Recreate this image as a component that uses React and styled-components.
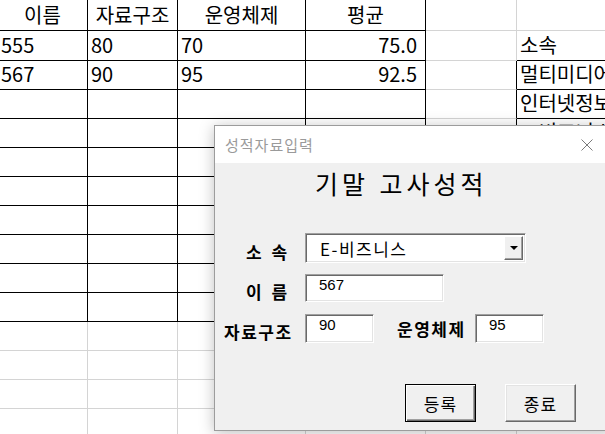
import React from 'react'
import styled, { createGlobalStyle } from 'styled-components'

const GlobalStyle = createGlobalStyle`
  html, body {
    margin: 0;
    padding: 0;
    background: #fff;
    overflow: hidden;
  }
  body {
    font-family: "Noto Sans CJK KR", "Noto Sans", sans-serif;
  }
`

const BLACK = '#000'
const GRID = '#d4d4d4'

const sheet = [
  ['이름', '자료구조', '운영체제', '평균', '', ''],
  ['555', '80', '70', '75.0', '', '소속'],
  ['567', '90', '95', '92.5', '', '멀티미디어'],
  ['', '', '', '', '', '인터넷정보'],
  ['', '', '', '', '', 'E-비즈니스'],
]
while (sheet.length < 15) sheet.push(['', '', '', '', '', ''])

// table A:D has thin black borders down to row 11, F3:F5 is a boxed list
const rightColor = (r, c) => {
  if (c <= 3 && r <= 10) return BLACK
  if (c === 4 && r >= 2 && r <= 4) return BLACK
  return GRID
}
const bottomColor = (r, c) => {
  if (c <= 3 && r <= 10) return BLACK
  if (c === 5 && r >= 1 && r <= 4) return BLACK
  return GRID
}
const alignOf = (r, c) => {
  if (r === 0 && c <= 3) return 'center'
  if (c === 3) return 'right'
  return 'left'
}

const App = () => {
  return (
    <Page>
      <GlobalStyle />
      <Sheet>
        {sheet.map((row, r) =>
          row.map((text, c) => (
            <Cell
              key={r + '-' + c}
              $align={alignOf(r, c)}
              $right={rightColor(r, c)}
              $bottom={bottomColor(r, c)}
            >
              {text}
            </Cell>
          ))
        )}
      </Sheet>

      <Dialog>
        <TitleBar>
          <Title>성적자료입력</Title>
          <svg width="12" height="12" viewBox="0 0 12 12">
            <path d="M0.5 0.5 L11.5 11.5 M11.5 0.5 L0.5 11.5" stroke="#7a7a7a" strokeWidth="1" fill="none" />
          </svg>
        </TitleBar>
        <Body>
          <Heading>기말 고사성적</Heading>
          <FieldRow>
            <Label $indent={31}>소 속</Label>
            <Combo>
              <ComboText>E-비즈니스</ComboText>
              <DropButton>
                <Arrow />
              </DropButton>
            </Combo>
          </FieldRow>
          <FieldRow $gap={11}>
            <Label $indent={31}>이 름</Label>
            <TextBox $width={139} $height={28}>567</TextBox>
          </FieldRow>
          <FieldRow $gap={12}>
            <Label $indent={9}>자료구조</Label>
            <TextBox $width={69} $height={29}>90</TextBox>
            <SideLabel>운영체제</SideLabel>
            <TextBox $width={69} $height={29}>95</TextBox>
          </FieldRow>
          <ButtonRow>
            <Button $default>등록</Button>
            <Button>종료</Button>
          </ButtonRow>
        </Body>
      </Dialog>
    </Page>
  )
}

const Page = styled.div`
  position: relative;
  width: 605px;
  height: 434px;
  overflow: hidden;
  background: #fff;
`

const Sheet = styled.div`
  display: grid;
  grid-template-columns: 90px 90px 128px 120px 91px 200px;
  grid-template-rows: 31px 30px repeat(13, 29px);
  margin-left: -2px;
  width: 719px;
`

const Cell = styled.div`
  box-sizing: border-box;
  display: flex;
  align-items: flex-end;
  justify-content: ${(p) =>
    p.$align === 'center' ? 'center' : p.$align === 'right' ? 'flex-end' : 'flex-start'};
  padding: 0 ${(p) => (p.$align === 'right' ? '8px' : '0')} 5px
    ${(p) => (p.$align === 'left' ? '3px' : '0')};
  border-right: 1px solid ${(p) => p.$right};
  border-bottom: 1px solid ${(p) => p.$bottom};
  font-size: 20px;
  line-height: 20px;
  color: #000;
  white-space: nowrap;
`

const Dialog = styled.div`
  position: absolute;
  left: 214px;
  top: 125px;
  width: 400px;
  height: 306px;
  box-sizing: border-box;
  border: 1px solid #9c9c9c;
  background: #f0f0f0;
  box-shadow: 0 2px 14px rgba(0, 0, 0, 0.25);
  display: flex;
  flex-direction: column;
`

const TitleBar = styled.div`
  height: 37px;
  flex: none;
  background: #fff;
  display: flex;
  align-items: center;
  justify-content: space-between;
  padding: 0 20px 0 10px;
`

const Title = styled.span`
  font-size: 15px;
  line-height: 15px;
  letter-spacing: 1px;
  color: #9a9a9a;
`

const Body = styled.div`
  display: flex;
  flex-direction: column;
  padding-top: 8px;
`

const Heading = styled.div`
  font-size: 25px;
  line-height: 25px;
  letter-spacing: 4px;
  word-spacing: 1px;
  color: #000;
  padding-left: 100px;
  margin-bottom: 37px;
  white-space: pre;
`

const FieldRow = styled.div`
  display: flex;
  align-items: center;
  margin-top: ${(p) => p.$gap || 0}px;
`

const Label = styled.div`
  box-sizing: border-box;
  width: 90px;
  flex: none;
  padding: 6px 0 0 ${(p) => p.$indent}px;
  font-size: 17px;
  line-height: 17px;
  font-weight: 700;
  letter-spacing: 1.5px;
  word-spacing: 3px;
  color: #000;
  white-space: pre;
`

const SideLabel = styled(Label)`
  width: 78px;
  padding-left: 0;
  margin-left: 23px;
`

const sunken = `
  box-sizing: border-box;
  background: #fff;
  border: 1px solid;
  border-color: #a0a0a0 #fff #fff #a0a0a0;
  box-shadow: inset 1px 1px 0 #696969, inset -1px -1px 0 #e3e3e3;
`

const Combo = styled.div`
  ${sunken}
  width: 221px;
  height: 30px;
  display: flex;
  align-items: center;
  padding: 2px 2px 2px 14px;
`

const ComboText = styled.span`
  flex: 1;
  font-size: 17px;
  line-height: 17px;
  letter-spacing: 1.5px;
  color: #000;
`

const DropButton = styled.div`
  box-sizing: border-box;
  width: 19px;
  align-self: stretch;
  background: #f0f0f0;
  border: 1px solid;
  border-color: #fff #696969 #696969 #fff;
  box-shadow: inset -1px -1px 0 #a0a0a0;
  display: flex;
  align-items: center;
  justify-content: center;
`

const Arrow = styled.span`
  width: 0;
  height: 0;
  border-left: 4px solid transparent;
  border-right: 4px solid transparent;
  border-top: 4px solid #000;
`

const TextBox = styled.div`
  ${sunken}
  width: ${(p) => p.$width}px;
  height: ${(p) => p.$height}px;
  flex: none;
  padding: 1px 0 0 13px;
  font-family: "Liberation Sans", Arial, sans-serif;
  font-size: 15px;
  line-height: 18px;
  color: #000;
`

const ButtonRow = styled.div`
  display: flex;
  gap: 29px;
  padding-left: 190px;
  margin-top: 41px;
`

const Button = styled.div`
  box-sizing: border-box;
  width: 71px;
  height: 38px;
  display: flex;
  align-items: center;
  justify-content: center;
  font-size: 17px;
  line-height: 17px;
  letter-spacing: 1px;
  color: #000;
  background: #f0f0f0;
  border: 1px solid;
  border-color: ${(p) => (p.$default ? '#000' : '#fff #696969 #696969 #fff')};
  box-shadow: ${(p) =>
    p.$default
      ? 'inset 1px 1px 0 #fff, inset -1px -1px 0 #696969, inset -2px -2px 0 #a0a0a0'
      : 'inset -1px -1px 0 #a0a0a0, inset 1px 1px 0 #e3e3e3'};
`

export default App
